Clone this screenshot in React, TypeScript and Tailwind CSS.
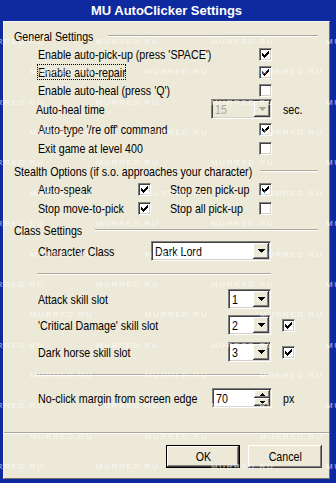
import React from "react";

const sunken =
  "border border-t-[#808080] border-l-[#808080] border-b-white border-r-white shadow-[inset_1px_1px_0_#404040,inset_-1px_-1px_0_#d4d0c8]";
const raised =
  "shadow-[inset_-1px_-1px_0_#404040,inset_1px_1px_0_#ffffff,inset_-2px_-2px_0_#808080,inset_2px_2px_0_#ece9d8]";

const CHECK = [
  [6],
  [5, 6],
  [0, 4, 5, 6],
  [0, 1, 3, 4, 5],
  [0, 1, 2, 3, 4],
  [1, 2, 3],
  [2],
];

function T({ children, center }: { children: React.ReactNode; center?: boolean }) {
  return (
    <span className={`inline-block whitespace-nowrap scale-x-[0.82] ${center ? "origin-center" : "origin-left"}`}>
      {children}
    </span>
  );
}

function CheckMark() {
  return (
    <svg width="7" height="7" viewBox="0 0 7 7" shapeRendering="crispEdges">
      {CHECK.map((row, y) =>
        row.map((x) => <rect key={`${x}-${y}`} x={x} y={y} width="1" height="1" fill="#000" />)
      )}
    </svg>
  );
}

function Check({ checked }: { checked?: boolean }) {
  return (
    <span className={`w-[13px] h-[13px] bg-white shrink-0 flex items-center justify-center ${sunken}`}>
      {checked && <CheckMark />}
    </span>
  );
}

function Arrow({ color = "#000" }: { color?: string }) {
  return (
    <svg width="7" height="4" viewBox="0 0 7 4" shapeRendering="crispEdges">
      <rect x="0" y="0" width="7" height="1" fill={color} />
      <rect x="1" y="1" width="5" height="1" fill={color} />
      <rect x="2" y="2" width="3" height="1" fill={color} />
      <rect x="3" y="3" width="1" height="1" fill={color} />
    </svg>
  );
}

function SmallArrow({ up }: { up?: boolean }) {
  return (
    <svg width="5" height="3" viewBox="0 0 5 3" shapeRendering="crispEdges">
      {up ? (
        <>
          <rect x="2" y="0" width="1" height="1" fill="#000" />
          <rect x="1" y="1" width="3" height="1" fill="#000" />
          <rect x="0" y="2" width="5" height="1" fill="#000" />
        </>
      ) : (
        <>
          <rect x="0" y="0" width="5" height="1" fill="#000" />
          <rect x="1" y="1" width="3" height="1" fill="#000" />
          <rect x="2" y="2" width="1" height="1" fill="#000" />
        </>
      )}
    </svg>
  );
}

function Combo({ value, width, disabled }: { value: string; width: string; disabled?: boolean }) {
  return (
    <div className={`${width} h-[20px] shrink-0 flex items-stretch ${sunken} ${disabled ? "bg-[#ece9d8]" : "bg-white"}`}>
      <span className={`flex-1 flex items-center pl-[3px] overflow-hidden ${disabled ? "text-[#aca899]" : "text-black"}`}>
        <T>{value}</T>
      </span>
      <span className={`w-[16px] m-[1px] bg-[#ece9d8] flex items-center justify-center ${raised}`}>
        <Arrow color={disabled ? "#aca899" : "#000"} />
      </span>
    </div>
  );
}

function Spin({ value, width }: { value: string; width: string }) {
  return (
    <div className={`${width} h-[20px] shrink-0 flex items-stretch bg-white ${sunken}`}>
      <span className="flex-1 flex items-center pl-[3px]">
        <T>{value}</T>
      </span>
      <span className="w-[16px] m-[1px] flex flex-col">
        <span className={`flex-1 bg-[#ece9d8] flex items-center justify-center ${raised}`}>
          <SmallArrow up />
        </span>
        <span className={`flex-1 bg-[#ece9d8] flex items-center justify-center ${raised}`}>
          <SmallArrow />
        </span>
      </span>
    </div>
  );
}

function GroupHeader({ title, mt, w }: { title: string; mt: string; w: string }) {
  return (
    <div className={`h-[18px] ${mt} flex items-center`}>
      <span className={`${w} shrink-0`}>
        <T>{title}</T>
      </span>
      <div className="flex-1 border-t border-t-[#aca899] border-b border-b-white" />
    </div>
  );
}

function Etched({ className }: { className: string }) {
  return <div className={`${className} border-t border-t-[#aca899] border-b border-b-white`} />;
}

function Watermarks() {
  const rows = Array.from({ length: 15 }, (_, k) => k);
  return (
    <div className="absolute inset-0 pointer-events-none overflow-hidden">
      {rows.map((k) => {
        const y = 38 + k * 30.36;
        const xs = k % 2 === 0 ? [-19, 96, 211, 326] : [30, 145, 260];
        return xs.map((x) => (
          <span
            key={`${k}-${x}`}
            className="absolute text-[8px] leading-none tracking-[1.6px] text-white/70 font-['Liberation_Sans',Arial,sans-serif] whitespace-nowrap"
            style={{ left: x, top: Math.round(y) }}
          >
            MURRED.RU
          </span>
        ));
      })}
    </div>
  );
}

export default function App() {
  return (
    <div className="relative w-[336px] h-[483px] bg-[#0f2a9f] pl-[3px] pr-[6px] pb-[4px] flex flex-col font-['Liberation_Sans',Arial,sans-serif] text-[13px] text-black leading-none select-none">
      <div className="h-[21px] shrink-0 flex items-center justify-center text-white font-bold text-[13px]">
        MU AutoClicker Settings
      </div>
      <div className="flex-1 bg-[#ece9d8] border-t border-l border-t-[#f4f3ee] border-l-[#f4f3ee] border-b border-r border-b-[#716f64] border-r-[#716f64] flex flex-col">
        <div className="pl-[10px] pr-[11px] pt-[5px] flex flex-col">
          <GroupHeader title="General Settings" mt="mt-0" w="w-[94px]" />
          <div className="h-[18px] flex items-center pl-[24px]">
            <span className="w-[221px]">
              <T>Enable auto-pick-up (press 'SPACE')</T>
            </span>
            <Check checked />
          </div>
          <div className="h-[18px] flex items-center pl-[24px]">
            <span className="w-[221px] flex">
              <span className="-ml-[1px] w-[89px] border border-dotted border-black h-[16px] flex items-center">
                <T>Enable auto-repair</T>
              </span>
            </span>
            <Check checked />
          </div>
          <div className="h-[18px] flex items-center pl-[24px]">
            <span className="w-[221px]">
              <T>Enable auto-heal (press 'Q')</T>
            </span>
            <Check />
          </div>
          <div className="h-[20px] flex items-center pl-[22px]">
            <span className="w-[175px]">
              <T>Auto-heal time</T>
            </span>
            <Combo value="15" width="w-[61px]" disabled />
            <span className="ml-[11px]">
              <T>sec.</T>
            </span>
          </div>
          <div className="h-[20px] flex items-center pl-[24px]">
            <span className="w-[221px]">
              <T>Auto-type '/re off' command</T>
            </span>
            <Check checked />
          </div>
          <div className="h-[18px] flex items-center pl-[24px]">
            <span className="w-[221px]">
              <T>Exit game at level 400</T>
            </span>
            <Check />
          </div>

          <GroupHeader title="Stealth Options (if s.o. approaches your character)" mt="mt-[5px]" w="w-[246px]" />
          <div className="h-[19px] flex items-center pl-[24px]">
            <span className="w-[100px]">
              <T>Auto-speak</T>
            </span>
            <Check checked />
            <span className="ml-[19px] w-[89px]">
              <T>Stop zen pick-up</T>
            </span>
            <Check checked />
          </div>
          <div className="h-[19px] flex items-center pl-[24px]">
            <span className="w-[100px]">
              <T>Stop move-to-pick</T>
            </span>
            <Check checked />
            <span className="ml-[19px] w-[89px]">
              <T>Stop all pick-up</T>
            </span>
            <Check />
          </div>

          <GroupHeader title="Class Settings" mt="mt-[3px]" w="w-[81px]" />
          <div className="h-[20px] mt-[2px] flex items-center pl-[24px]">
            <span className="w-[113px]">
              <T>Character Class</T>
            </span>
            <Combo value="Dark Lord" width="w-[120px]" />
          </div>
          <Etched className="mt-[12px] ml-[23px] w-[234px]" />
          <div className="h-[20px] mt-[14px] flex items-center pl-[24px]">
            <span className="w-[190px]">
              <T>Attack skill slot</T>
            </span>
            <Combo value="1" width="w-[43px]" />
          </div>
          <div className="h-[20px] mt-[6px] flex items-center pl-[24px]">
            <span className="w-[190px]">
              <T>'Critical Damage' skill slot</T>
            </span>
            <Combo value="2" width="w-[43px]" />
            <span className="ml-[11px]">
              <Check checked />
            </span>
          </div>
          <div className="h-[20px] mt-[7px] flex items-center pl-[24px]">
            <span className="w-[190px]">
              <T>Dark horse skill slot</T>
            </span>
            <Combo value="3" width="w-[43px]" />
            <span className="ml-[11px]">
              <Check checked />
            </span>
          </div>
          <Etched className="mt-[12px] ml-[23px] w-[231px]" />
          <div className="h-[20px] mt-[12px] flex items-center pl-[24px]">
            <span className="w-[174px]">
              <T>No-click margin from screen edge</T>
            </span>
            <Spin value="70" width="w-[60px]" />
            <span className="ml-[11px]">
              <T>px</T>
            </span>
          </div>
        </div>
        <Etched className="mt-[24px] w-full" />
        <div className="mt-[11px] flex justify-end gap-[8px] pr-[7px]">
          <button className="w-[74px] h-[23px] border border-black bg-[#ece9d8] flex items-center justify-center">
            <span className={`w-full h-full flex items-center justify-center ${raised}`}>
              <T center>OK</T>
            </span>
          </button>
          <button className={`w-[74px] h-[23px] bg-[#ece9d8] flex items-center justify-center ${raised}`}>
            <T center>Cancel</T>
          </button>
        </div>
      </div>
      <Watermarks />
    </div>
  );
}
